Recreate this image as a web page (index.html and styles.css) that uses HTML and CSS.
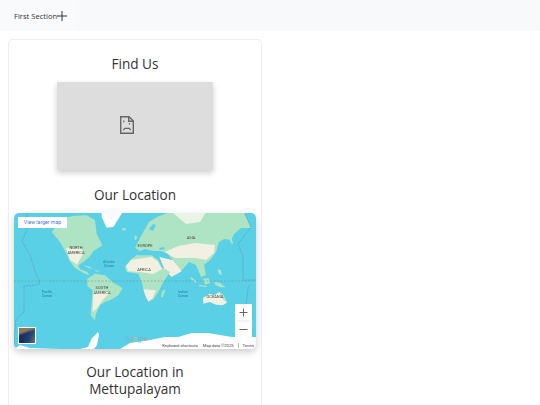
FILE: index.html
```html
<!DOCTYPE html>
<html lang="en">
<head>
<meta charset="utf-8">
<title>Find Us</title>
<link rel="stylesheet" href="styles.css">
</head>
<body>
<header class="topbar">
  <div class="tab">
    <span class="tab-label">First Section</span>
    <svg class="plus" width="10" height="10" viewBox="0 0 10 10"><path d="M5 0v10M0 5h10" stroke="#333" stroke-width="1" fill="none"/></svg>
  </div>
</header>
<main class="card">
  <h2 class="title">Find Us</h2>
  <div class="photo">
    <svg class="broken" width="14" height="18" viewBox="0 0 14 18" fill="none" stroke="#666" stroke-width="1.4">
      <path d="M.7.7h8.3l4.3 4.3v12.3H.7z"/>
      <path d="M8.7.7v4.6h4.6"/>
      <path d="M3.8 4.5v1.8M9.5 7v1.4" stroke-width="1.2"/>
      <path d="M3.3 14l1.5-1.6h4.4l1.5 1.6" stroke-width="1.2"/>
    </svg>
  </div>
  <h2 class="title title-second">Our Location</h2>
  <div class="map">
    <svg class="map-art" width="242" height="136" viewBox="14 213 242 136">
      <rect x="14" y="213" width="242" height="136" fill="#5ad0e6"/>
      <!-- Americas -->
      <g transform="translate(50,212) scale(.3333)">
        <path fill="#aee4c3" d="M5 60L35 20 70 12 110 10 135 25 140 65 157 100 130 118 118 135 100 150 85 160 90 172 112 180 118 190 100 183 75 168 58 145 48 122 30 90Z"/>
        <path fill="#f1f0e2" d="M48 108L95 110 100 125 85 150 82 158 60 143Z"/>
        <path fill="#aee4c3" d="M100 160l18 4 12 6-14-2zM135 175l10 1 2 3-10-1z"/>
        <path fill="#fff" d="M155 0H215V5L190 45 170 47 155 15Z"/>
        <path fill="#aee4c3" d="M112 200L135 185 165 190 190 212 218 228 205 250 186 262 165 270 150 280 138 305 135 325 122 310 125 270 128 235 112 222Z"/>
        <path fill="#f1f0e2" d="M130 238L182 240 160 262 140 290 128 300Z"/>
      </g>
      <!-- Eurasia -->
      <path fill="#aee4c3" d="M135 248L139 240 142 234 145 229 149 222 157 217 165 214 170 212H244L251 228 241 228 234 234 231 240 224 239 219 242 216 252 211 259 204 265 206 275 201 277 196 265 189 262 183 269 179 272 175 262 170 257 168 254 161 251 153 251 145 249 140 251Z"/>
      <path fill="#e8f5e6" d="M172 212H206L200 222 186 224Z"/>
      <path fill="#f1f0e2" d="M165 252L178 246 195 243 215 245 214 253 206 260 195 258 185 258 175 258Z"/>
      <path fill="#5ad0e6" d="M149 229l4-5 3 1-3 6zM159 248l5-1 1 2-5 1z"/>
      <!-- Africa, Arabia -->
      <g transform="translate(120,212) scale(.3333)">
        <path fill="#f1f0e2" d="M118 135L160 145 185 178 155 195 135 175Z"/>
        <path fill="#aee4c3" d="M45 70l7 5-4 10-5-4zM5 50l13-2-3 7-8 0z"/>
        <path fill="#aee4c3" d="M30 145L50 130 95 130 115 145 125 165 150 180 130 210 115 240 100 262 85 270 75 250 65 210 55 185 20 180 15 165Z"/>
        <path fill="#f1f0e2" d="M18 162L35 143 95 135 115 150 126 172 100 186 60 180 25 178Z"/>
        <path fill="#f1f0e2" d="M70 232L108 235 97 260 85 268 76 250Z"/>
        <path fill="#aee4c3" d="M128 235l8-2-8 24-6-3z"/>
      </g>
      <!-- East Asia islands, Oceania -->
      <g transform="translate(186,212) scale(.3333)">
        <path fill="#aee4c3" d="M128 70l8 6 6 20-8-3zM95 172l10 2 2 16-8-4zM15 195l18 14-4 3-16-12zM50 200l18-2 4 14-14 6zM40 218l24 4-2 3-22-3zM85 210l16 2 18 14-14 0-16-6z"/>
        <path fill="#f1f0e2" d="M51 258L70 245 85 250 100 240 112 250 123 272 110 280 90 278 72 270 52 275Z"/>
        <path fill="#aee4c3" d="M100 240l12 10 10 20-10-6z"/>
      </g>
      <!-- Antarctica -->
      <path fill="#fff" d="M120 349L130 343 150 340 165 337 178 337 192 333 208 333 232 337 257 337V349Z"/>
      <path fill="#fff" d="M80 349L88 347 92 338 98 332 99 335 97 345 94 349Z"/>
      <path fill="#fff" d="M14 349L20 345 30 348 60 349Z"/>
      <path d="M14 281h242" stroke="#6f9aa6" stroke-width=".6" stroke-dasharray="2 1.5"/>
      <path d="M27 213l2 12-7 16 8 14 5 16 5 12-4 2-12 1v26l-8 7-2 27M244 212l7 15-13 17 5 12v24h19M250 285l-2 3-2 18" fill="none" stroke="#56808c" stroke-width=".5" stroke-dasharray="1.5 1"/>
      <g class="map-land">
        <text x="76" y="249">NORTH</text><text x="76" y="254">AMERICA</text>
        <text x="102" y="289">SOUTH</text><text x="102" y="294">AMERICA</text>
        <text x="145" y="247">EUROPE</text>
        <text x="144" y="271">AFRICA</text>
        <text x="191" y="239">ASIA</text>
        <text x="215" y="298">OCEANIA</text>
      </g>
      <g class="map-sea">
        <text x="109" y="263">Atlantic</text><text x="109" y="267">Ocean</text>
        <text x="47" y="293">Pacific</text><text x="47" y="297">Ocean</text>
        <text x="183" y="293">Indian</text><text x="183" y="297">Ocean</text>
      </g>
    </svg>
    <a class="larger">View larger map</a>
    <div class="thumb"></div>
    <span class="google"><span class="g-blue">G</span><span class="g-red">o</span><span class="g-yellow">o</span><span class="g-blue">g</span><span class="g-green">l</span><span class="g-red">e</span></span>
    <div class="attrib"><span>Keyboard shortcuts</span><span>Map data ©2025</span><span class="terms">Terms</span></div>
    <div class="zoom">
      <svg width="17" height="34" viewBox="0 0 17 34" fill="none" stroke="#666" stroke-width="1">
        <path d="M4.5 8.5h8M8.5 4.5v8M4.5 25.5h8"/>
        <path d="M2 17h13" stroke="#e6e6e6"/>
      </svg>
    </div>
  </div>
  <h2 class="title title-third">Our Location in Mettupalayam</h2>
</main>
</body>
</html>
```
FILE: styles.css
```css
html, body {
  margin: 0;
  padding: 0;
  height: 405px;
  overflow: hidden;
  background: #fff;
  font-family: "Open Sans", sans-serif;
  color: #333;
}
.topbar {
  height: 31px;
  background: #f8f9fb;
  display: flex;
}
.tab {
  display: flex;
  align-items: center;
  padding: 0 9px 0 14px;
  background: #f9fafc;
}
.tab-label {
  font-size: 7.6px;
  color: #333;
}
.card {
  margin: 8px 0 0 8px;
  width: 254px;
  height: 400px;
  padding: 0 5px;
  box-sizing: border-box;
  border: 1px solid #eee;
  border-radius: 4px;
  display: flex;
  flex-direction: column;
  align-items: center;
}
.title {
  margin: 14px 0 0;
  font-size: 13.6px;
  font-weight: 400;
  line-height: 19px;
  text-align: center;
  color: #333;
}
.photo {
  width: 156px;
  height: 88px;
  margin-top: 9px;
  background: #ddd;
  box-shadow: 0 3px 6px rgba(0,0,0,.2);
  display: flex;
  align-items: center;
  justify-content: center;
}
.broken { margin: 0 16px 2px 0; }
.title-second { margin-top: 15px; }
.map {
  position: relative;
  width: 242px;
  height: 136px;
  margin-top: 9px;
  border-radius: 5px;
  overflow: hidden;
  flex: none;
  box-shadow: 0 3px 7px rgba(0,0,0,.2);
}
.map-art {
  display: block;
  filter: blur(.5px);
}
.map-land text {
  font: 4px "Roboto", sans-serif;
  fill: #444;
  text-anchor: middle;
}
.map-sea text {
  font: 3.5px "Roboto", sans-serif;
  fill: #1f7f9a;
  text-anchor: middle;
}
.larger {
  position: absolute;
  left: 4px;
  top: 4px;
  width: 49px;
  height: 11px;
  background: #fff;
  color: #4a78d6;
  font: 5.2px/11px "Roboto", sans-serif;
  text-align: center;
}
.thumb {
  position: absolute;
  left: 4px;
  top: 114px;
  width: 18px;
  height: 17px;
  border: 1px solid #fff;
  box-sizing: border-box;
  background:
    linear-gradient(160deg, #8a7a58 0 25%, transparent 40%),
    linear-gradient(110deg, #1a3060 0 40%, #24477c 70%, #7f7358 100%);
}
.google {
  position: absolute;
  left: 111px;
  top: 122px;
  font: 7px/8px "Roboto", sans-serif;
  opacity: .7;
}
.g-blue { color: #7d9fe0; }
.g-red { color: #e0877d; }
.g-yellow { color: #e5c66f; }
.g-green { color: #7fc28f; }
.attrib {
  position: absolute;
  right: 2px;
  bottom: 1px;
  display: flex;
  gap: 5px;
  font: 4.1px/5px "Roboto", sans-serif;
  color: #444;
}
.terms {
  border-left: 1px solid #bbb;
  padding-left: 3px;
}
.zoom {
  position: absolute;
  left: 221px;
  top: 91px;
  width: 17px;
  height: 34px;
  background: #fff;
}
.zoom svg { display: block; }
.title-third {
  margin-top: 14px;
  width: 170px;
  line-height: 17px;
}
```
